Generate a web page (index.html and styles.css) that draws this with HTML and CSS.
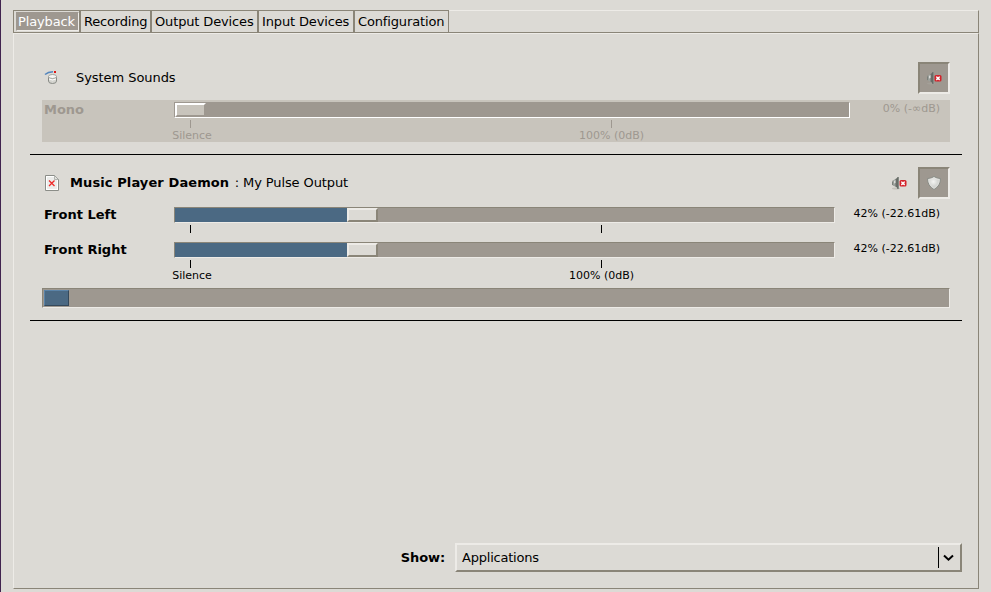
FILE: index.html
```html
<!DOCTYPE html>
<html lang="en">
<head>
<meta charset="utf-8">
<title>Volume Control</title>
<link rel="stylesheet" href="styles.css">
</head>
<body>
<svg class="defs" width="0" height="0">
  <defs>
    <linearGradient id="steel" x1="0" x2="1"><stop offset="0" stop-color="#6b706b"/><stop offset=".4" stop-color="#a9ada8"/><stop offset="1" stop-color="#5c615c"/></linearGradient>
    <radialGradient id="silver" cx=".45" cy=".4"><stop offset="0" stop-color="#f4f4f2"/><stop offset="1" stop-color="#c6c8c4"/></radialGradient>
    <symbol id="muted" viewBox="0 0 16 16">
      <ellipse cx="5" cy="13.500" rx="4" ry="1" fill="#aaa89f" opacity=".5"/>
      <path d="M1 7L2 5.500L6 3V12.500L2 10.500L1 9.500Z" fill="url(#steel)"/>
      <path d="M3 6L4.500 5V8L3 8.500Z" fill="#d9dbd8"/>
      <path d="M6 2.500L7 2V14L6 13.500Z" fill="#666b66"/>
      <path d="M7.500 2V14" stroke="#858a84"/>
      <rect x="8.500" y="5" width="7" height="6.500" rx="1.500" fill="#d3222a"/>
      <rect x="10.500" y="6.800" width="3" height="3" fill="#fff" opacity=".6"/>
      <path d="M10.300 6.600l3.400 3.400m0-3.400l-3.400 3.400" stroke="#fff" stroke-width="1.200"/>
    </symbol>
  </defs>
</svg>
<div class="window">
  <nav class="tabs">
    <div class="tab active"><span>Playback</span></div>
    <div class="tab recording">Recording</div>
    <div class="tab outputs">Output Devices</div>
    <div class="tab inputs">Input Devices</div>
    <div class="tab config">Configuration</div>
    <div class="tab-rest"></div>
  </nav>
  <main class="panel">
    <section class="stream first">
      <header class="title">
        <svg class="app-icon" width="16" height="16" viewBox="0 0 16 16">
          <path d="M1 4.500Q4 2 9 1.800" fill="none" stroke="#5486bd" stroke-width="1.600"/>
          <rect x="10" y="1" width="2" height="2" fill="#e01616"/>
          <path d="M4.500 6.500V11Q4.500 13.500 8.500 13.500T12.500 11V6.500Z" fill="#d5d5d0" stroke="#888a85"/>
          <ellipse cx="8.500" cy="6.500" rx="4" ry="2" fill="#f6f6f4" stroke="#a2a49f"/>
          <path d="M5 9Q8.500 11 12 9" fill="none" stroke="#fff"/>
        </svg>
        <span class="name system">System Sounds</span>
        <span class="toggle pressed"><svg width="16" height="16"><use href="#muted"/></svg></span>
      </header>
      <div class="channel last disabled">
        <b class="label">Mono</b>
        <div class="scale">
          <div class="trough"><i class="thumb"></i></div>
          <i class="tick low"></i><i class="tick full"></i>
          <span class="mark low">Silence</span><span class="mark full">100% (0dB)</span>
        </div>
        <span class="value">0% (-∞dB)</span>
      </div>
    </section>
    <section class="stream">
      <header class="title">
        <svg class="app-icon" width="16" height="16" viewBox="0 0 16 16">
          <path d="M1.500 .5H10.500L14.500 4.500V15.500H1.500Z" fill="#fff" stroke="#8b8d88"/>
          <path d="M3 2H10V5H13V14H3Z" fill="#ededeb"/>
          <path d="M10.500 .5V4.500H14.500Z" fill="#e2e2df" stroke="#9a9c97" stroke-width=".7"/>
          <path d="M5 5.500l5.500 5.500m0-5.500l-5.500 5.500" stroke="#ef2929" stroke-width="1.300"/>
        </svg>
        <span class="name"><b>Music Player Daemon</b><span class="detail">: My Pulse Output</span></span>
        <svg class="mute" width="16" height="16"><use href="#muted"/></svg>
        <span class="toggle pressed"><svg width="16" height="16" viewBox="0 0 16 16">
          <path d="M8 1.500Q11 3.500 14.500 3.500Q14.500 11 8 14.500Q1.500 11 1.500 3.500Q5 3.500 8 1.500Z" fill="url(#silver)" stroke="#8a8d87"/>
          <path d="M8 2.800Q10.500 4.400 13.300 4.500Q13 10.500 8 13.300Q3 10.500 2.700 4.500Q5.500 4.400 8 2.800Z" fill="none" stroke="#e8e8e5" stroke-width=".7"/>
        </svg></span>
      </header>
      <div class="channels">
        <div class="channel">
          <b class="label">Front Left</b>
          <div class="scale">
            <div class="trough"><i class="fill"></i><i class="thumb"></i></div>
            <i class="tick low"></i><i class="tick full"></i>
          </div>
          <span class="value">42% (-22.61dB)</span>
        </div>
        <div class="channel last">
          <b class="label">Front Right</b>
          <div class="scale">
            <div class="trough"><i class="fill"></i><i class="thumb"></i></div>
            <i class="tick low"></i><i class="tick full"></i>
            <span class="mark low">Silence</span><span class="mark full">100% (0dB)</span>
          </div>
          <span class="value">42% (-22.61dB)</span>
        </div>
      </div>
      <div class="meter"><i></i></div>
    </section>
    <footer class="filter">
      <b>Show:</b>
      <div class="combo"><span>Applications</span>
        <svg width="24" height="21" viewBox="0 0 24 21"><path d="M.5 0V21" stroke="#000"/><path d="M6 8.500L10.500 12.700L15 8.500" fill="none" stroke="#000" stroke-width="2"/></svg>
      </div>
    </footer>
  </main>
</div>
</body>
</html>
```
FILE: styles.css
```css
* { box-sizing: border-box; }
body { margin: 0; background: #dcdad5; color: #000; font: 13px/16px "DejaVu Sans", sans-serif; }
.defs { position: absolute; }
svg { display: block; flex: none; }
.window { height: 592px; padding: 10px 12px 3px 12px; border-left: 1px solid #41234f; display: flex; flex-direction: column; }
.tabs { display: flex; height: 23px; flex: none; letter-spacing: -.14px; }
.tab { border: 1px solid #8a8578; white-space: nowrap; padding: 3px 0 0 3px; }
.tab.active { width: 67px; padding: 1px 0 0 2px; }
.tab.active span { display: block; width: 63px; height: 19px; padding: 1px 0 0 1px; border: 1px solid #edebe7; border-left-color: #9e9890; border-top-color: #9e9890; background: #9e9890; color: #fff; }
.recording { width: 71px; letter-spacing: -.2px; }
.outputs { width: 107px; }
.inputs { width: 96px; }
.config { width: 95px; }
.tab-rest { flex: 1; border: 1px solid #8a8578; border-left: 0; border-top-color: #edebe7; }
.panel { flex: 1; border: 1px solid #8a8578; border-top-color: #edebe7; border-left-color: #edebe7; padding: 0 16px; display: flex; flex-direction: column; }
.stream { border-bottom: 1px solid #000; padding: 12px; flex: none; }
.first { padding-top: 28px; }
.title { display: flex; align-items: center; height: 32px; margin-bottom: 6px; }
.app-icon { margin-left: 2px; }
.name { flex: 1; margin-left: 10px; white-space: nowrap; }
.name.system { margin-left: 16px; letter-spacing: -.06px; }
.name b { letter-spacing: .1px; }
.detail { margin-left: 5.500px; letter-spacing: -.1px; }
.mute { margin-right: 11px; }
.toggle { width: 32px; height: 32px; border: 2px solid; border-color: #8a8578 #edebe7 #edebe7 #8a8578; background: #9e9890; padding: 6px; }
.channel { display: flex; height: 35px; }
.channel.last { height: 42px; }
.label { width: 132px; padding: 2px 0 0 2px; }
.scale { flex: 1; position: relative; padding-top: 2px; }
.trough { height: 16px; background: #9e9890; border: 1px solid; border-color: #8a8578 #edebe7 #edebe7 #8a8578; display: flex; }
.fill { width: 172px; background: #4b6983; }
.thumb { width: 31px; height: 14px; background: #dcdad5; border: 2px solid; border-color: #edebe7 #8a8578 #8a8578 #edebe7; }
.value { width: 115px; padding: 2px 10px 0 0; text-align: right; font-size: 11px; line-height: 14px; white-space: nowrap; }
.tick { position: absolute; top: 20px; width: 1px; height: 8px; background: currentColor; }
.tick.low { left: 16px; }
.tick.full { left: 427px; }
.mark { position: absolute; top: 29px; width: 80px; text-align: center; font-size: 11px; line-height: 14px; white-space: nowrap; }
.mark.low { left: -22px; }
.mark.full { left: 387.500px; }
.disabled { background: #c8c4bc; color: #9e9890; }
.disabled .value { width: 100px; }
.disabled .tick.full { left: 437px; }
.disabled .mark.full { left: 397.500px; }
.disabled .trough { border-color: #9e9890 #fff #fff #9e9890; }
.disabled .thumb { background: #c8c4bc; border-color: #fff #9e9890 #9e9890 #fff; }
.meter { height: 20px; margin-top: 6px; background: #9e9890; border: 1px solid; border-color: #8a8578 #edebe7 #edebe7 #8a8578; padding: 1px; }
.meter i { display: block; width: 25px; height: 16px; background: #4b6983; border: 1px solid; border-color: #5a83a8 #35495b #35495b #5a83a8; }
.filter { margin-top: auto; margin-bottom: 16px; display: flex; justify-content: flex-end; align-items: center; }
.filter b { letter-spacing: -.1px; }
.combo { letter-spacing: -.22px; width: 507px; height: 29px; margin-left: 10px; border: 2px solid; border-color: #edebe7 #8a8578 #8a8578 #edebe7; display: flex; justify-content: space-between; align-items: center; padding: 0 0 0 5px; }
.combo svg { margin-right: -2px; }
```
